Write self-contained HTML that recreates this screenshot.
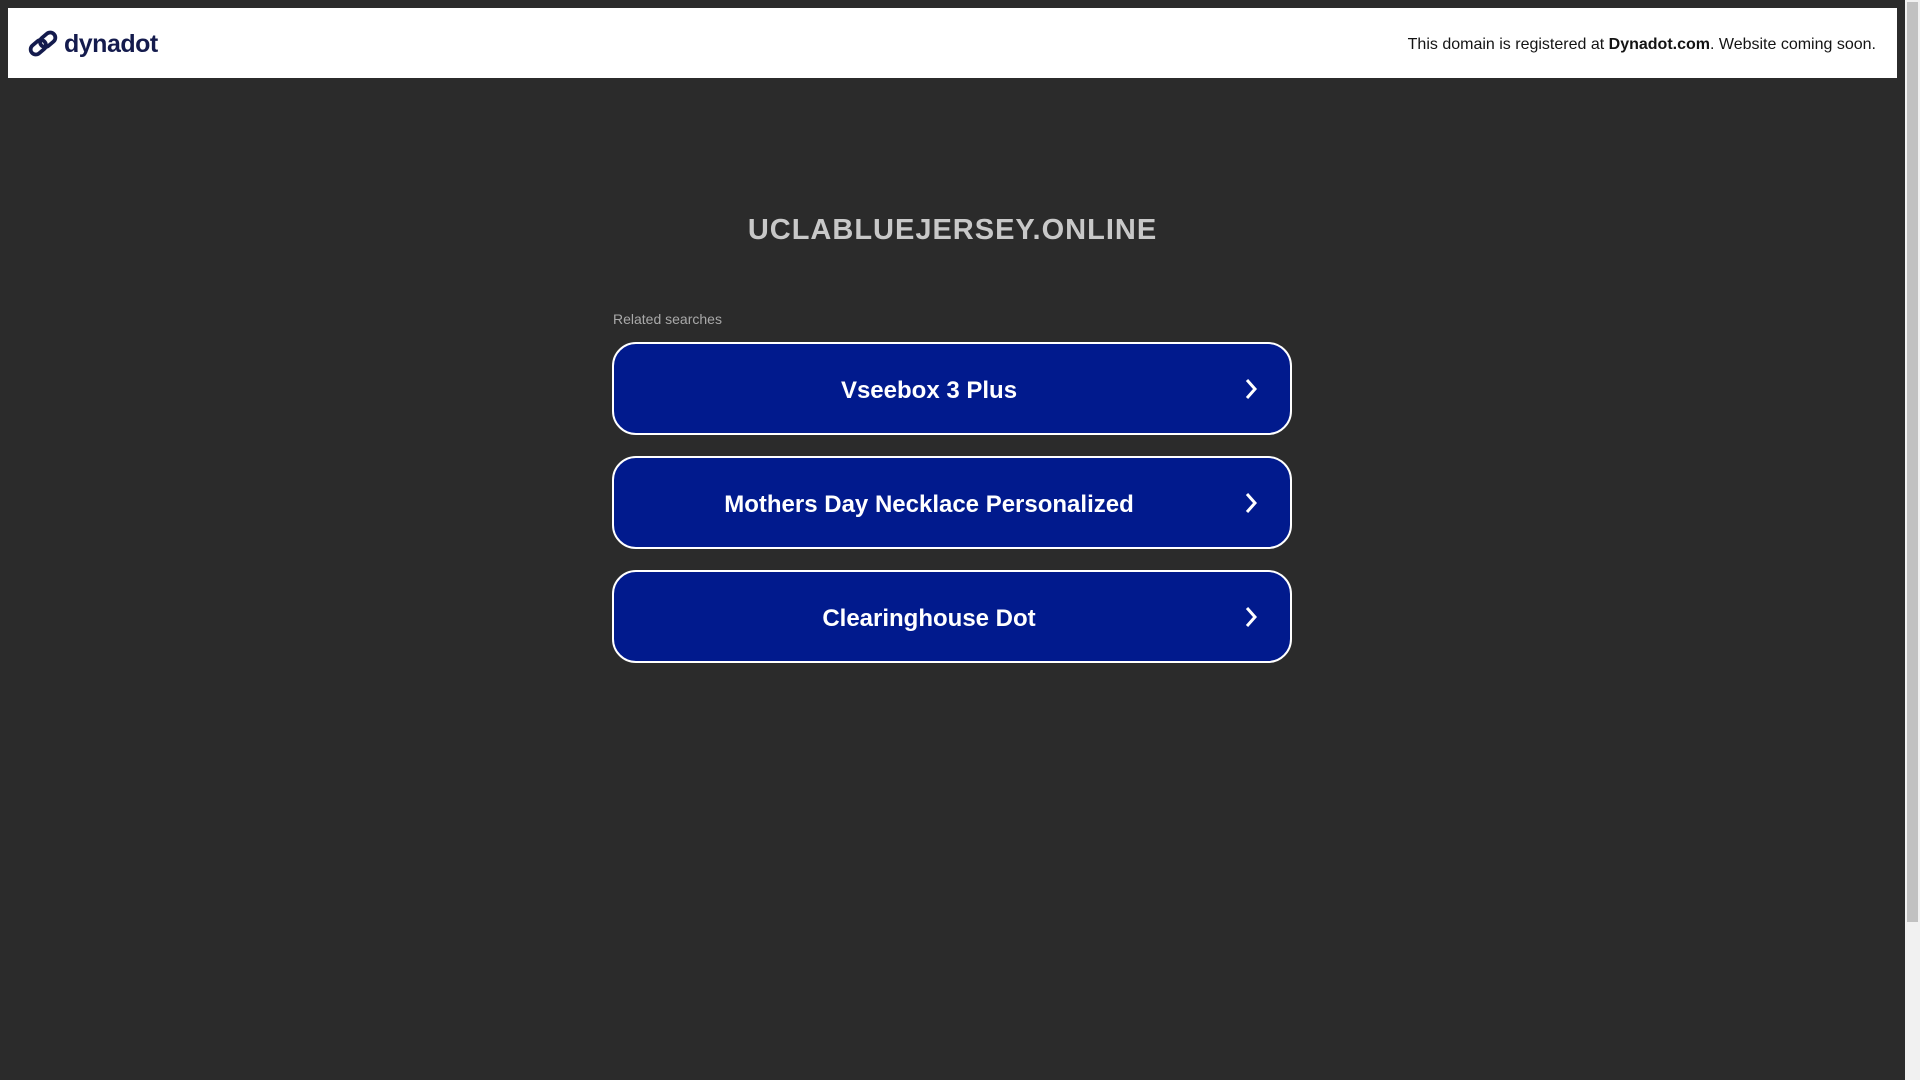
<!DOCTYPE html>
<html><head><style>
html,body{margin:0;padding:0;}
body{width:1920px;height:1080px;background:#2b2b2b;position:relative;overflow:hidden;font-family:"Liberation Sans",sans-serif;}
.hdr{position:absolute;left:8px;top:8px;width:1889px;height:70px;background:#fff;}
.logo{position:absolute;left:20px;top:21px;display:flex;align-items:center;}
.logo span{font-size:25px;font-weight:bold;color:#141b4d;margin-left:6px;letter-spacing:-0.5px;}
.rt{position:absolute;right:21px;top:28px;font-size:16px;color:#141414;}
.sb{position:absolute;right:0;top:0;width:15px;height:1080px;background:#f1f1f1;}
.sb div{position:absolute;left:2px;top:2px;width:11px;height:920px;background:#c1c1c1;}
h1{position:absolute;left:0;width:1905px;top:214px;margin:0;text-align:center;font-size:29px;color:#c8c8c8;letter-spacing:1px;}
.rs{position:absolute;left:613px;top:311px;font-size:14px;color:#a9a9a9;}
.btn{position:absolute;left:612px;width:676px;height:89px;border:2px solid #fff;border-radius:24px;background:#011a8d;color:#fff;font-weight:bold;font-size:24px;}
.btn .t{position:absolute;left:0;width:630px;top:2px;line-height:89px;text-align:center;}
.btn svg{position:absolute;left:630px;top:34px;}
</style></head><body>
<div class="hdr">
<div class="logo"><svg width="30" height="30" viewBox="0 0 32 32" fill="none" stroke="#141b4d" stroke-width="4" stroke-linecap="round"><rect x="2" y="14" width="18" height="11" rx="5.5" transform="rotate(-40 11 19.5)"/><rect x="12" y="6" width="18" height="11" rx="5.5" transform="rotate(-40 21 11.5)"/></svg><span>dynadot</span></div>
<div class="rt">This domain is registered at <b>Dynadot.com</b>. Website coming soon.</div>
</div>
<div class="sb"><div></div></div>
<h1>UCLABLUEJERSEY.ONLINE</h1>
<div class="rs">Related searches</div>
<div class="btn" style="top:342px"><div class="t">Vseebox 3 Plus</div><svg width="14" height="22" viewBox="0 0 14 22"><path d="M3 2l8 9-8 9" stroke="#fff" stroke-width="3" fill="none"/></svg></div>
<div class="btn" style="top:456px"><div class="t">Mothers Day Necklace Personalized</div><svg width="14" height="22" viewBox="0 0 14 22"><path d="M3 2l8 9-8 9" stroke="#fff" stroke-width="3" fill="none"/></svg></div>
<div class="btn" style="top:570px"><div class="t">Clearinghouse Dot</div><svg width="14" height="22" viewBox="0 0 14 22"><path d="M3 2l8 9-8 9" stroke="#fff" stroke-width="3" fill="none"/></svg></div>
</body></html>
